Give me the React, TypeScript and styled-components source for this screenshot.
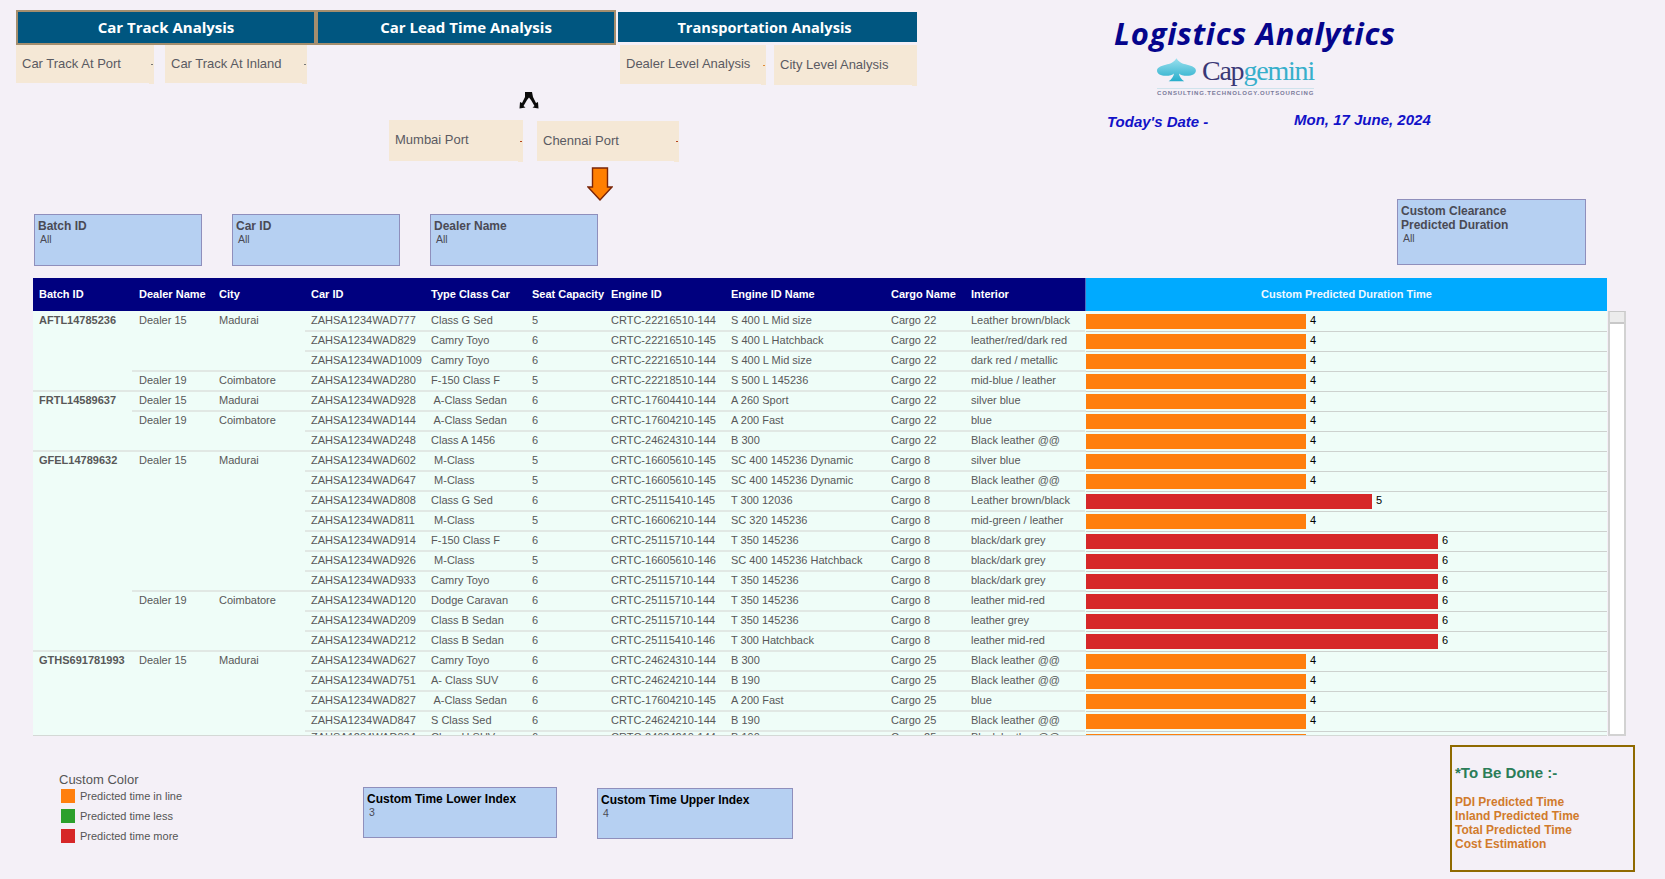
import React from "react";
import styled, { createGlobalStyle } from "styled-components";

const Global = createGlobalStyle`
  html, body { margin: 0; padding: 0; background: #f4f0f7; }
  body { font-family: "Liberation Sans", Arial, sans-serif; }
`;

const Page = styled.div`
  width: 1665px;
  height: 879px;
  box-sizing: border-box;
  padding: 10px 0 0 16px;
  overflow: hidden;
  background: #f4f0f7;
`;

const Header = styled.header`
  display: flex;
  height: 189px;
`;

const NavColumn = styled.nav`
  width: 901px;
  flex: none;
  display: flex;
  flex-direction: column;
`;

const TabRow = styled.div`
  display: flex;
  height: 35px;
`;

const MainTab = styled.div<{ $plain?: boolean }>`
  box-sizing: border-box;
  width: ${(p) => (p.$plain ? "299px" : "300px")};
  height: ${(p) => (p.$plain ? "30px" : "35px")};
  margin: ${(p) => (p.$plain ? "2px 0 0 2px" : "0")};
  padding-right: ${(p) => (p.$plain ? "6px" : "0")};
  border: ${(p) => (p.$plain ? "none" : "2px solid #a48e6e")};
  background: #005680;
  color: #fff;
  font: 700 ${(p) => (p.$plain ? "14.6px" : "15px")}/1 "Open Sans", sans-serif;
  display: flex;
  align-items: center;
  justify-content: center;
`;

const SubRow = styled.div`
  display: flex;
  height: 40px;
`;

const SubTab = styled.div<{ $w: number; $h: number; $gap?: number; $tick?: string }>`
  position: relative;
  box-sizing: border-box;
  width: ${(p) => p.$w}px;
  height: ${(p) => p.$h}px;
  margin-left: ${(p) => p.$gap ?? 0}px;
  padding: 0 0 2px 6px;
  background: #f5e8d6;
  color: #5a5a62;
  font: 400 13px/1 "Liberation Sans", sans-serif;
  display: flex;
  align-items: center;
  &::after {
    content: "";
    position: absolute;
    right: 1px;
    top: 50%;
    width: 2px;
    height: 1px;
    background: ${(p) => p.$tick ?? "#777"};
  }
  &::before {
    content: "";
    position: absolute;
    right: 0;
    bottom: -1px;
    width: 5px;
    height: 1px;
    background: #f5e8d6;
  }
`;

const ForkArrow = styled.svg`
  display: block;
  margin: 7px 0 0 503px;
  flex: none;
`;

const PortRow = styled.div`
  display: flex;
  align-items: flex-end;
  height: 41px;
  margin: 11px 0 0 373px;
`;

const DownArrow = styled.svg`
  display: block;
  margin: 6px 0 0 571px;
  flex: none;
`;

const Brand = styled.div`
  margin-left: 190px;
  display: flex;
  flex-direction: column;
`;

const Title = styled.h1`
  margin: 3px 0 0 7px;
  color: #05058c;
  font: italic 700 31px/40px "Open Sans", sans-serif;
  letter-spacing: 0.72px;
  white-space: nowrap;
`;

const Logo = styled.div`
  margin: 5px 0 0 50px;
  width: 157px;
  display: flex;
  flex-direction: column;
`;

const LogoTop = styled.div`
  display: flex;
  align-items: flex-start;
  height: 30px;
`;

const LogoWord = styled.div`
  margin-left: 6px;
  font: 400 28px/25px "Liberation Serif", serif;
  letter-spacing: -1.2px;
  color: #3a3876;
  white-space: nowrap;
  span { color: #37afcb; }
`;

const LogoTag = styled.div`
  border-top: 1px solid #cfe3ec;
  color: #7a7a9a;
  font: 700 6px/8px "Liberation Sans", sans-serif;
  letter-spacing: 0.85px;
  white-space: nowrap;
`;

const DateRow = styled.div`
  display: flex;
  align-items: flex-start;
  margin-top: 12px;
  color: #1212c8;
  font: italic 700 15px/18px "Liberation Sans", sans-serif;
`;

const DateLabel = styled.div`
  width: 187px;
  padding-top: 4px;
`;

const DateValue = styled.div`
  white-space: nowrap;
  padding-top: 2px;
`;

const FilterRow = styled.section`
  display: flex;
  align-items: flex-end;
  height: 67px;
  padding-left: 18px;
  gap: 30px;
`;

const FilterBox = styled.div<{ $w: number; $h: number; $gap?: number; $start?: boolean; $top?: number }>`
  box-sizing: border-box;
  width: ${(p) => p.$w}px;
  height: ${(p) => p.$h}px;
  margin-left: ${(p) => p.$gap ?? 0}px;
  margin-top: ${(p) => p.$top ?? 0}px;
  align-self: ${(p) => (p.$start ? "flex-start" : "auto")};
  padding: 4px 3px;
  background: #b6d0f2;
  border: 1px solid #8f8fbc;
  color: #4a4a55;
`;

const FilterName = styled.div<{ $dark?: boolean }>`
  font: 700 12px/14px "Liberation Sans", sans-serif;
  color: ${(p) => (p.$dark ? "#000" : "#4a4a55")};
`;

const FilterValue = styled.div`
  margin-left: 2px;
  font: 400 10.5px/13px "Liberation Sans", sans-serif;
`;

const TableWrap = styled.section`
  display: flex;
  margin: 12px 0 0 17px;
`;

const Table = styled.div`
  width: 1574px;
  flex: none;
`;

const HeadRow = styled.div`
  display: flex;
  height: 33px;
  background: #00007f;
  color: #fff;
  font: 700 11px/33px "Liberation Sans", sans-serif;
`;

const HeadCell = styled.div<{ $w: number; $pad?: number }>`
  width: ${(p) => p.$w}px;
  flex: none;
  padding-left: ${(p) => p.$pad ?? 6}px;
  box-sizing: border-box;
  white-space: nowrap;
`;

const HeadBar = styled.div`
  flex: 1;
  border-left: 1px solid #4a6ac0;
  background: #00aaff;
  text-align: center;
  color: #f0f8ff;
`;

const Body = styled.div`
  height: 425px;
  padding-top: 1px;
  overflow: hidden;
  background: #effdf8;
  border-bottom: 1px solid #d4d9d6;
  box-sizing: border-box;
  color: #585858;
  font: 400 11px/16px "Liberation Sans", sans-serif;
`;

const BatchGroup = styled.div`
  display: flex;
  box-shadow: inset 0 -2px 0 #e1e8e4;
`;

const BatchCell = styled.div`
  width: 99px;
  flex: none;
  box-sizing: border-box;
  padding-left: 6px;
  font-weight: 700;
  white-space: nowrap;
`;

const BatchRows = styled.div`
  flex: 1;
  min-width: 0;
`;

const DealerGroup = styled.div`
  display: flex;
  box-shadow: inset 0 -2px 0 #e1e8e4;
`;

const TextCell = styled.div<{ $w: number; $pad?: number }>`
  width: ${(p) => p.$w}px;
  flex: none;
  box-sizing: border-box;
  padding-left: ${(p) => p.$pad ?? 6}px;
  white-space: pre;
`;

const DealerRows = styled.div`
  flex: 1;
  min-width: 0;
`;

const Row = styled.div`
  display: flex;
  height: 20px;
`;

const CellLine = styled.div<{ $peek?: boolean }>`
  display: flex;
  width: 780px;
  flex: none;
  height: 20px;
  box-sizing: border-box;
  border-bottom: 2px solid #e1e8e4;
  & > div {
    transform: translateY(${(p) => (p.$peek ? "-3px" : "0")});
  }
`;

const BarCell = styled.div`
  flex: 1;
  min-width: 0;
  margin-left: 1px;
  height: 20px;
  box-sizing: border-box;
  border-bottom: 1px solid #cdd2cf;
  padding-top: 2px;
  display: flex;
  align-items: flex-start;
  background: #effdf8;
`;

const Bar = styled.div<{ $w: number; $c: string }>`
  width: ${(p) => p.$w}px;
  height: 15px;
  background: ${(p) => p.$c};
`;

const BarValue = styled.span`
  margin-left: 4px;
  color: #000;
  font: 400 11px/13px "Liberation Sans", sans-serif;
`;

const Scrollbar = styled.div`
  box-sizing: border-box;
  width: 18px;
  height: 425px;
  margin: 33px 0 0 1px;
  background: #fff;
  border: 2px solid #d2d2d2;
  border-top: 1px solid #c8c8c8;
`;

const Thumb = styled.div`
  height: 10px;
  background: #ececec;
  border-bottom: 2px solid #c8c8c8;
`;

const Footer = styled.footer`
  display: flex;
  align-items: flex-start;
`;

const Legend = styled.div`
  width: 304px;
  margin: 37px 0 0 43px;
  flex: none;
`;

const LegendTitle = styled.div`
  font: 400 13px/14px "Liberation Sans", sans-serif;
  color: #555;
  margin-bottom: -1px;
`;

const LegendItem = styled.div`
  display: flex;
  align-items: center;
  height: 20px;
  margin-left: 2px;
  color: #555;
  font: 400 11px/20px "Liberation Sans", sans-serif;
`;

const Swatch = styled.span<{ $c: string }>`
  width: 14px;
  height: 14px;
  margin-right: 5px;
  background: ${(p) => p.$c};
`;

const IndexBoxes = styled.div`
  display: flex;
  align-items: flex-start;
  margin-top: 51px;
`;

const TodoBox = styled.aside`
  box-sizing: border-box;
  width: 185px;
  height: 127px;
  margin: 9px 0 0 657px;
  flex: none;
  padding: 17px 3px 0;
  border: 2px solid #8f6a00;
`;

const TodoTitle = styled.div`
  color: #2b7d58;
  font: 700 15px/18px "Liberation Sans", sans-serif;
  margin-bottom: 13px;
`;

const TodoItem = styled.div`
  color: #d17b2c;
  font: 700 12px/14px "Liberation Sans", sans-serif;
`;

const W = { car: 120, type: 101, seat: 79, engine: 120, name: 160, cargo: 80, interior: 120 };
const ORANGE = "#ff7f0e";
const RED = "#d62728";
const GREEN = "#2ca02c";

type R = [string, string, string, string, string, string, string, number];
type D = { dealer: string; city: string; rows: R[] };
type B = { id: string; dealers: D[] };

const data: B[] = [
  { id: "AFTL14785236", dealers: [
    { dealer: "Dealer 15", city: "Madurai", rows: [
      ["ZAHSA1234WAD777", "Class G Sed", "5", "CRTC-22216510-144", "S 400 L Mid size", "Cargo 22", "Leather brown/black", 4],
      ["ZAHSA1234WAD829", "Camry Toyo", "6", "CRTC-22216510-145", "S 400 L Hatchback", "Cargo 22", "leather/red/dark red", 4],
      ["ZAHSA1234WAD1009", "Camry Toyo", "6", "CRTC-22216510-144", "S 400 L Mid size", "Cargo 22", "dark red / metallic", 4],
    ] },
    { dealer: "Dealer 19", city: "Coimbatore", rows: [
      ["ZAHSA1234WAD280", "F-150 Class F", "5", "CRTC-22218510-144", "S 500 L 145236", "Cargo 22", "mid-blue / leather", 4],
    ] },
  ] },
  { id: "FRTL14589637", dealers: [
    { dealer: "Dealer 15", city: "Madurai", rows: [
      ["ZAHSA1234WAD928", " A-Class Sedan", "6", "CRTC-17604410-144", "A 260 Sport", "Cargo 22", "silver blue", 4],
    ] },
    { dealer: "Dealer 19", city: "Coimbatore", rows: [
      ["ZAHSA1234WAD144", " A-Class Sedan", "6", "CRTC-17604210-145", "A 200 Fast", "Cargo 22", "blue", 4],
      ["ZAHSA1234WAD248", "Class A 1456", "6", "CRTC-24624310-144", "B 300", "Cargo 22", "Black leather @@", 4],
    ] },
  ] },
  { id: "GFEL14789632", dealers: [
    { dealer: "Dealer 15", city: "Madurai", rows: [
      ["ZAHSA1234WAD602", " M-Class", "5", "CRTC-16605610-145", "SC 400 145236 Dynamic", "Cargo 8", "silver blue", 4],
      ["ZAHSA1234WAD647", " M-Class", "5", "CRTC-16605610-145", "SC 400 145236 Dynamic", "Cargo 8", "Black leather @@", 4],
      ["ZAHSA1234WAD808", "Class G Sed", "6", "CRTC-25115410-145", "T 300 12036", "Cargo 8", "Leather brown/black", 5],
      ["ZAHSA1234WAD811", " M-Class", "5", "CRTC-16606210-144", "SC 320 145236", "Cargo 8", "mid-green / leather", 4],
      ["ZAHSA1234WAD914", "F-150 Class F", "6", "CRTC-25115710-144", "T 350 145236", "Cargo 8", "black/dark grey", 6],
      ["ZAHSA1234WAD926", " M-Class", "5", "CRTC-16605610-146", "SC 400 145236 Hatchback", "Cargo 8", "black/dark grey", 6],
      ["ZAHSA1234WAD933", "Camry Toyo", "6", "CRTC-25115710-144", "T 350 145236", "Cargo 8", "black/dark grey", 6],
    ] },
    { dealer: "Dealer 19", city: "Coimbatore", rows: [
      ["ZAHSA1234WAD120", "Dodge Caravan", "6", "CRTC-25115710-144", "T 350 145236", "Cargo 8", "leather mid-red", 6],
      ["ZAHSA1234WAD209", "Class B Sedan", "6", "CRTC-25115710-144", "T 350 145236", "Cargo 8", "leather grey", 6],
      ["ZAHSA1234WAD212", "Class B Sedan", "6", "CRTC-25115410-146", "T 300 Hatchback", "Cargo 8", "leather mid-red", 6],
    ] },
  ] },
  { id: "GTHS691781993", dealers: [
    { dealer: "Dealer 15", city: "Madurai", rows: [
      ["ZAHSA1234WAD627", "Camry Toyo", "6", "CRTC-24624310-144", "B 300", "Cargo 25", "Black leather @@", 4],
      ["ZAHSA1234WAD751", "A- Class SUV", "6", "CRTC-24624210-144", "B 190", "Cargo 25", "Black leather @@", 4],
      ["ZAHSA1234WAD827", " A-Class Sedan", "6", "CRTC-17604210-145", "A 200 Fast", "Cargo 25", "blue", 4],
      ["ZAHSA1234WAD847", "S Class Sed", "6", "CRTC-24624210-144", "B 190", "Cargo 25", "Black leather @@", 4],
      ["ZAHSA1234WAD804", "Class H SUV", "6", "CRTC-24624210-144", "B 190", "Cargo 25", "Black leather @@", 4],
    ] },
  ] },
];

const barWidth = (v: number) => 66 * v - 44;

const DataRow = ({ r, peek }: { r: R; peek?: boolean }) => (
  <Row>
    <CellLine $peek={peek}>
      <TextCell $w={W.car}>{r[0]}</TextCell>
      <TextCell $w={W.type}>{r[1]}</TextCell>
      <TextCell $w={W.seat}>{r[2]}</TextCell>
      <TextCell $w={W.engine}>{r[3]}</TextCell>
      <TextCell $w={W.name}>{r[4]}</TextCell>
      <TextCell $w={W.cargo}>{r[5]}</TextCell>
      <TextCell $w={W.interior}>{r[6]}</TextCell>
    </CellLine>
    <BarCell>
      <Bar $w={barWidth(r[7])} $c={r[7] > 4 ? RED : ORANGE} />
      <BarValue>{r[7]}</BarValue>
    </BarCell>
  </Row>
);

export default function App() {
  return (
    <Page>
      <Global />
      <Header>
        <NavColumn>
          <TabRow>
            <MainTab>Car Track Analysis</MainTab>
            <MainTab>Car Lead Time Analysis</MainTab>
            <MainTab $plain>Transportation Analysis</MainTab>
          </TabRow>
          <SubRow>
            <SubTab $w={138} $h={38}>Car Track At Port</SubTab>
            <SubTab $w={142} $h={38} $gap={11}>Car Track At Inland</SubTab>
            <SubTab $w={146} $h={39} $gap={313} $tick="#e08a3a">Dealer Level Analysis</SubTab>
            <SubTab $w={143} $h={40} $gap={8} $tick="#f5e8d6">City Level Analysis</SubTab>
          </SubRow>
          <ForkArrow width="20" height="17" viewBox="0 0 20 17">
            <path d="M6 0h7l1 5 3 6 2-1 .5 6.500-6-1 2-1.500-3.500-6-2-2.500-2 2.500-3.500 6 2 1.500-6 1 .5-6.500 2 1 3-6z" fill="#0b0b0b" />
          </ForkArrow>
          <PortRow>
            <SubTab $w={134} $h={41} $tick="#b5431c">Mumbai Port</SubTab>
            <SubTab $w={142} $h={40} $gap={14} $tick="#b5431c">Chennai Port</SubTab>
          </PortRow>
          <DownArrow width="26" height="34" viewBox="0 0 26 34">
            <path d="M5.500 1h15v19H25L13 33 1 20h4.500z" fill="#ff7f00" stroke="#7a2508" strokeWidth="1.4" />
          </DownArrow>
        </NavColumn>
        <Brand>
          <Title>Logistics Analytics</Title>
          <Logo>
            <LogoTop>
              <svg width="40" height="24" viewBox="0 0 40 24">
                <defs>
                  <linearGradient id="spade" x1="0" y1="0" x2="0" y2="1">
                    <stop offset="0" stopColor="#9be0ee" />
                    <stop offset="1" stopColor="#27aecb" />
                  </linearGradient>
                </defs>
                <path d="M20 0C22 4 27 6 31 6.500C36 7.500 40 9.500 40 12.500C40 16 36 18 31 18C27 18 24 17 22.500 15.500C23 18.500 25 21.500 28 23.500H12C15 21.500 17 18.500 17.500 15.500C16 17 13 18 9 18C4 18 0 16 0 12.500C0 9.500 4 7.500 9 6.500C13 6 18 4 20 0Z" fill="url(#spade)" />
              </svg>
              <LogoWord>Cap<span>gemini</span></LogoWord>
            </LogoTop>
            <LogoTag>CONSULTING.TECHNOLOGY.OUTSOURCING</LogoTag>
          </Logo>
          <DateRow>
            <DateLabel>Today's Date -</DateLabel>
            <DateValue>Mon, 17 June, 2024</DateValue>
          </DateRow>
        </Brand>
      </Header>

      <FilterRow>
        <FilterBox $w={168} $h={52}><FilterName>Batch ID</FilterName><FilterValue>All</FilterValue></FilterBox>
        <FilterBox $w={168} $h={52}><FilterName>Car ID</FilterName><FilterValue>All</FilterValue></FilterBox>
        <FilterBox $w={168} $h={52}><FilterName>Dealer Name</FilterName><FilterValue>All</FilterValue></FilterBox>
        <FilterBox $w={189} $h={66} $gap={769} $start>
          <FilterName>Custom Clearance<br />Predicted Duration</FilterName>
          <FilterValue>All</FilterValue>
        </FilterBox>
      </FilterRow>

      <TableWrap>
        <Table>
          <HeadRow>
            <HeadCell $w={99}>Batch ID</HeadCell>
            <HeadCell $w={80} $pad={7}>Dealer Name</HeadCell>
            <HeadCell $w={93} $pad={7}>City</HeadCell>
            <HeadCell $w={W.car}>Car ID</HeadCell>
            <HeadCell $w={W.type}>Type Class Car</HeadCell>
            <HeadCell $w={W.seat}>Seat Capacity</HeadCell>
            <HeadCell $w={W.engine}>Engine ID</HeadCell>
            <HeadCell $w={W.name}>Engine ID Name</HeadCell>
            <HeadCell $w={W.cargo}>Cargo Name</HeadCell>
            <HeadCell $w={W.interior}>Interior</HeadCell>
            <HeadBar>Custom Predicted Duration Time</HeadBar>
          </HeadRow>
          <Body>
            {data.map((b) => (
              <BatchGroup key={b.id}>
                <BatchCell>{b.id}</BatchCell>
                <BatchRows>
                  {b.dealers.map((d) => (
                    <DealerGroup key={d.dealer}>
                      <TextCell $w={80} $pad={7}>{d.dealer}</TextCell>
                      <TextCell $w={93} $pad={7}>{d.city}</TextCell>
                      <DealerRows>
                        {d.rows.map((r) => <DataRow key={r[0]} r={r} peek={r[0] === "ZAHSA1234WAD804"} />)}
                      </DealerRows>
                    </DealerGroup>
                  ))}
                </BatchRows>
              </BatchGroup>
            ))}
          </Body>
        </Table>
        <Scrollbar><Thumb /></Scrollbar>
      </TableWrap>

      <Footer>
        <Legend>
          <LegendTitle>Custom Color</LegendTitle>
          <LegendItem><Swatch $c={ORANGE} />Predicted time in line</LegendItem>
          <LegendItem><Swatch $c={GREEN} />Predicted time less</LegendItem>
          <LegendItem><Swatch $c={RED} />Predicted time more</LegendItem>
        </Legend>
        <IndexBoxes>
          <FilterBox $w={194} $h={51}><FilterName $dark>Custom Time Lower Index</FilterName><FilterValue>3</FilterValue></FilterBox>
          <FilterBox $w={196} $h={51} $gap={40} $top={1}><FilterName $dark>Custom Time Upper Index</FilterName><FilterValue>4</FilterValue></FilterBox>
        </IndexBoxes>
        <TodoBox>
          <TodoTitle>*To Be Done :-</TodoTitle>
          <TodoItem>PDI Predicted Time</TodoItem>
          <TodoItem>Inland Predicted Time</TodoItem>
          <TodoItem>Total Predicted Time</TodoItem>
          <TodoItem>Cost Estimation</TodoItem>
        </TodoBox>
      </Footer>
    </Page>
  );
}
